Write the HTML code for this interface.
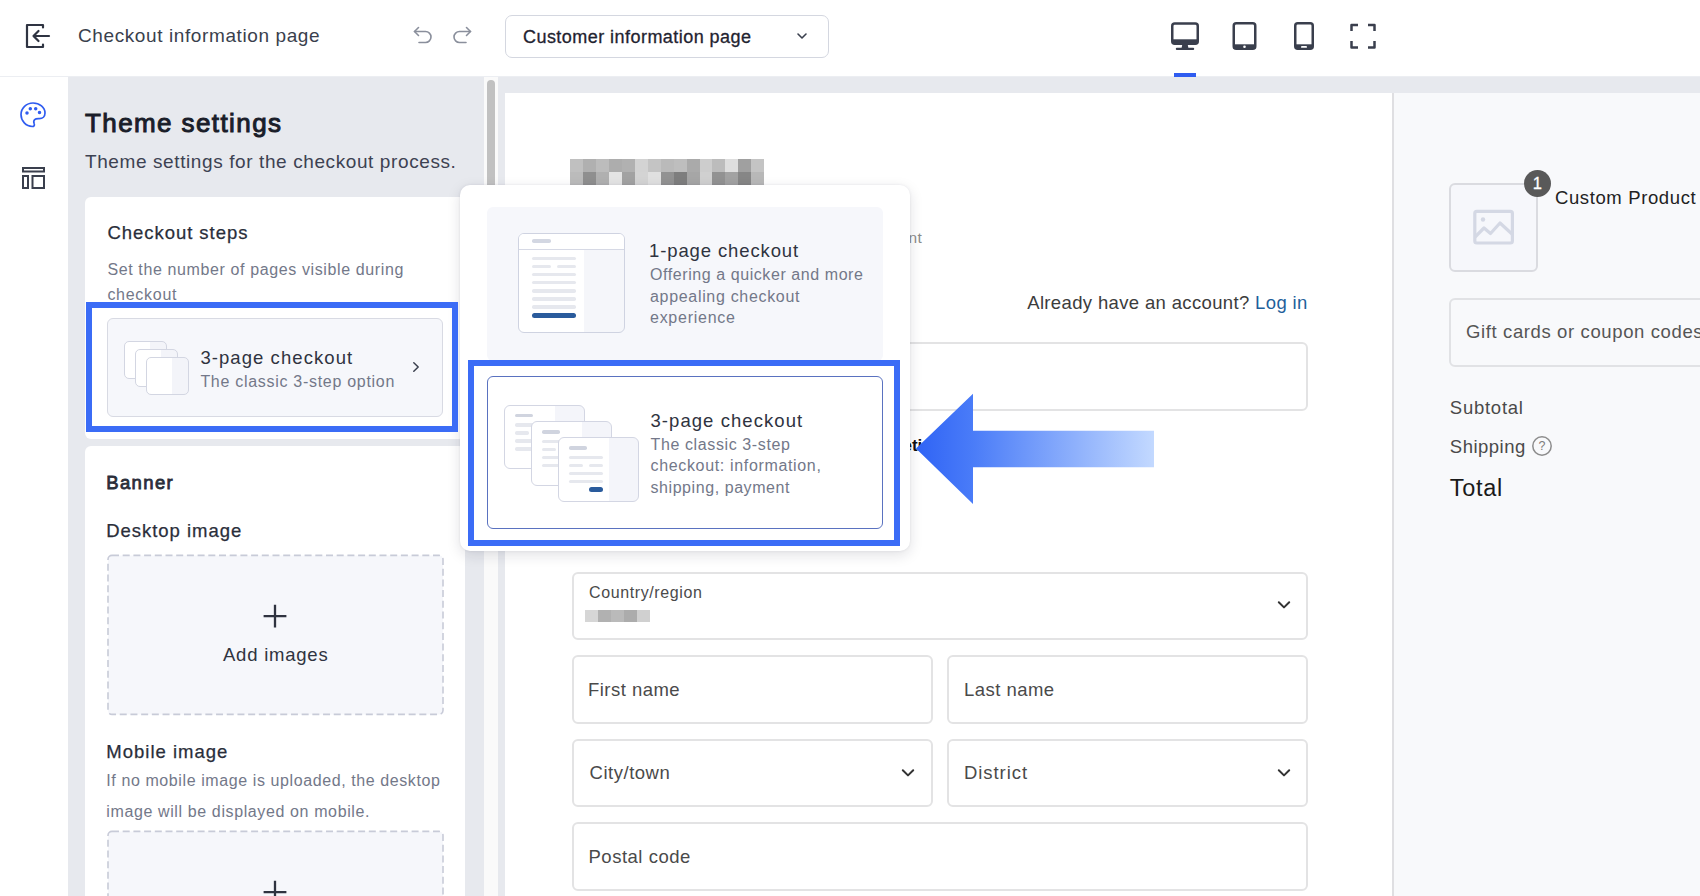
<!DOCTYPE html>
<html lang="en">
<head>
<meta charset="utf-8">
<title>Checkout information page</title>
<style>
*{box-sizing:border-box;margin:0;padding:0}
html,body{width:1700px;height:896px;overflow:hidden;background:#e7e9ee}
body{font-family:"Liberation Sans",Arial,sans-serif;color:#2b2f3a;position:relative}
.abs{position:absolute}
.t{position:absolute;white-space:nowrap;line-height:1}
/* top bar */
#top{left:0;top:0;width:1700px;height:77px;background:#fff;border-bottom:1px solid #eceef2}
#rail{left:0;top:77px;width:68px;height:819px;background:#fff}
#panel{left:68px;top:77px;width:415px;height:819px;background:#e7e9ee}
#track{left:483.500px;top:77px;width:14.500px;height:819px;background:#fafafa}
#thumb{left:487px;top:80px;width:8px;height:420px;background:#c1c1c1;border-radius:4px}
#page{left:505px;top:93px;width:888px;height:803px;background:#fff}
#side{left:1392px;top:93px;width:308px;height:803px;background:#f8f9fb;border-left:2px solid #dfdfe2}
.card{position:absolute;background:#fff;border-radius:6px}
.field{position:absolute;border:2px solid #e3e3e4;border-radius:6px;background:#fff}
.pg{width:43px;height:38px;border:1px solid #d3d6e2;border-radius:5px;background:linear-gradient(90deg,#fff 0,#fff 62%,#f3f4f9 62%,#f3f4f9 100%)}
.hl{position:absolute;border:6px solid #3b6cf6}
</style>
</head>
<body>
<!-- TOP BAR -->
<div id="top" class="abs"></div>
<div id="rail" class="abs"></div>
<div id="panel" class="abs"></div>
<div id="track" class="abs"></div>
<div id="thumb" class="abs"></div>
<div id="page" class="abs"></div>
<div id="side" class="abs"></div>

<!-- topbar content -->
<div id="topc">
<svg class="abs" style="left:24px;top:21px" width="28" height="28" viewBox="0 0 28 28" fill="none" stroke="#2f3442" stroke-width="2.200" stroke-linecap="round" stroke-linejoin="round"><path d="M19 6.5V4H3v22h16v-2.500"/><path d="M25 15H9.500M14.500 10l-5 5 5 5"/></svg>
<div class="t" id="t1" style="left:78.00px;top:26.00px;letter-spacing:0.604px;font-size:19px;color:#3a3f4d">Checkout information page</div>
<svg class="abs" style="left:411px;top:24px" width="24" height="24" viewBox="0 0 24 24" fill="none" stroke="#8a8f9c" stroke-width="1.600" stroke-linecap="round" stroke-linejoin="round"><path d="M7.500 3.500L3.500 7.500l4 4"/><path d="M3.500 7.500h11a5.500 5.500 0 0 1 0 11H8"/></svg>
<svg class="abs" style="left:450px;top:24px" width="24" height="24" viewBox="0 0 24 24" fill="none" stroke="#8a8f9c" stroke-width="1.600" stroke-linecap="round" stroke-linejoin="round"><path d="M16.500 3.500l4 4-4 4"/><path d="M20.500 7.500h-11a5.500 5.500 0 0 0 0 11H16"/></svg>
<div class="abs" style="left:505px;top:15px;width:324px;height:43px;border:1px solid #d4d7e0;border-radius:7px;background:#fff"></div>
<div class="t" id="t2" style="left:523.00px;top:28.00px;letter-spacing:0.454px;font-size:18px;color:#1f2330;-webkit-text-stroke:0.3px #1f2330">Customer information page</div>
<svg class="abs" style="left:795px;top:30px" width="14" height="12" viewBox="0 0 14 12" fill="none" stroke="#3a3f4d" stroke-width="1.600" stroke-linecap="round" stroke-linejoin="round"><path d="M3 4l4 4 4-4"/></svg>
<!-- device icons -->
<svg class="abs" style="left:1171px;top:22px" width="28" height="28" viewBox="0 0 28 28"><rect x="1.250" y="1.450" width="25.500" height="20.300" rx="2.500" fill="none" stroke="#3a3f4d" stroke-width="2.500"/><rect x="1" y="17.300" width="26" height="4.700" fill="#3a3f4d"/><path d="M11.300 22.500h5.400l.700 3.500h-6.800z" fill="#3a3f4d"/><rect x="4.800" y="25.700" width="18.400" height="2.300" rx="1" fill="#3a3f4d"/></svg>
<svg class="abs" style="left:1232px;top:22px" width="25" height="28" viewBox="0 0 25 28"><rect x="1.750" y="1.250" width="21.500" height="25.500" rx="2.500" fill="#fff" stroke="#3a3f4d" stroke-width="2.500"/><rect x="1.500" y="22.300" width="22" height="4.500" fill="#3a3f4d"/><circle cx="12.500" cy="24.800" r="1.300" fill="#fff"/></svg>
<svg class="abs" style="left:1293px;top:22px" width="22" height="28" viewBox="0 0 22 28"><rect x="2.250" y="1.250" width="17.500" height="25.500" rx="2.500" fill="#fff" stroke="#3a3f4d" stroke-width="2.500"/><rect x="2" y="22.300" width="18" height="4.500" fill="#3a3f4d"/><rect x="8" y="24" width="6" height="1.800" rx="0.900" fill="#fff"/></svg>
<svg class="abs" style="left:1349px;top:22px" width="28" height="28" viewBox="0 0 28 28" fill="none" stroke="#3a3f4d" stroke-width="2.500" stroke-linejoin="round"><path d="M2.500 9V3h6.500M19 3h6.500v6M25.500 19v6.500H19M9 25.500H2.500V19"/></svg>
<div class="abs" style="left:1174px;top:73px;width:22px;height:4px;background:#2f5cf0"></div>
</div>
<!-- rail content -->
<div id="railc">
<svg class="abs" style="left:19px;top:101px" width="28" height="28" viewBox="0 0 28 28" fill="none" stroke="#2f5cf0" stroke-width="1.700" stroke-linecap="round" stroke-linejoin="round"><path d="M14 2C7.400 2 2 7.200 2 13.600 2 20 7 25.500 13.300 25.500c1.700 0 2.500-1.300 1.900-2.700-.6-1.500-.7-3.100 .5-4.200 1.200-1.100 2.800-.9 4.600-.9 3.300 0 5.700-2.300 5.700-5.700C26 6.400 20.600 2 14 2z"/><circle cx="8" cy="12" r="0.900" fill="#2f5cf0"/><circle cx="11.300" cy="7.700" r="0.900" fill="#2f5cf0"/><circle cx="16.700" cy="7.700" r="0.900" fill="#2f5cf0"/><circle cx="20.500" cy="11.500" r="0.900" fill="#2f5cf0"/></svg>
<svg class="abs" style="left:21px;top:166px" width="26" height="24" viewBox="0 0 26 24" fill="none" stroke="#3a3f4d" stroke-width="2"><rect x="2" y="2" width="21" height="3.500"/><rect x="2" y="10" width="5" height="12"/><rect x="11.500" y="10" width="11.500" height="12"/></svg>
</div>
<!-- panel content -->
<div id="panelc">
<div class="t" id="t3" style="left:85.00px;top:110.00px;letter-spacing:1.404px;font-size:26px;color:#1a1d29;-webkit-text-stroke:1px #1a1d29">Theme settings</div>
<div class="t" id="t4" style="left:85.00px;top:152.00px;letter-spacing:0.601px;font-size:19px;color:#3d4252">Theme settings for the checkout process.</div>
<!-- card 1 -->
<div class="card" style="left:85px;top:197px;width:380px;height:242px"></div>
<div class="t" id="t5" style="left:107.40px;top:224.00px;letter-spacing:0.964px;font-size:18.500px;color:#2a2e3a;-webkit-text-stroke:0.250px #2a2e3a">Checkout steps</div>
<div class="t" id="t6" style="left:107.40px;top:262.00px;letter-spacing:0.620px;font-size:16px;color:#737889">Set the number of pages visible during</div>
<div class="t" id="t7" style="left:107.40px;top:287.00px;letter-spacing:0.715px;font-size:16px;color:#737889">checkout</div>
<div class="abs" style="left:107px;top:318px;width:336px;height:99px;border:1px solid #d8dae3;border-radius:6px;background:#f6f7fb"></div>
<div class="abs pg" style="left:124px;top:341px"></div>
<div class="abs pg" style="left:135px;top:349px"></div>
<div class="abs pg" style="left:146px;top:357px"></div>
<div class="t" id="t8" style="left:200.40px;top:349.00px;letter-spacing:1.068px;font-size:18.500px;color:#2f3340">3-page checkout</div>
<div class="t" id="t9" style="left:200.40px;top:374.00px;letter-spacing:0.705px;font-size:16px;color:#737889">The classic 3-step option</div>
<svg class="abs" style="left:409px;top:359px" width="14" height="16" viewBox="0 0 14 16" fill="none" stroke="#3a3f4d" stroke-width="1.500" stroke-linecap="round" stroke-linejoin="round"><path d="M4.800 3.800L9.200 8l-4.400 4.200"/></svg>
<!-- card 2 -->
<div class="card" style="left:85px;top:446px;width:380px;height:470px"></div>
<div class="t" id="t10" style="left:106.20px;top:474.00px;letter-spacing:1.381px;font-size:18.500px;color:#2a2e3a;-webkit-text-stroke:0.800px #2a2e3a">Banner</div>
<div class="t" id="t11" style="left:106.20px;top:522.00px;letter-spacing:0.975px;font-size:18.500px;color:#2a2e3a;-webkit-text-stroke:0.250px #2a2e3a">Desktop image</div>
<svg class="abs" style="left:106px;top:553.0px" width="340" height="164" viewBox="0 0 340 164"><rect x="2" y="2.400" width="335" height="159" rx="4" fill="#f6f7fb" stroke="#c8cbd8" stroke-width="1.600" stroke-dasharray="7 3.700"/></svg>
<svg class="abs" style="left:262px;top:603px" width="26" height="26" viewBox="0 0 26 26" fill="none" stroke="#2f3340" stroke-width="2.300"><path d="M1.600 13.100h22.800M13 1.700v22.800"/></svg>
<div class="t" id="t12" style="left:223.00px;top:646.00px;letter-spacing:0.773px;font-size:18.500px;color:#2f3340">Add images</div>
<div class="t" id="t13" style="left:106.30px;top:743.00px;letter-spacing:0.997px;font-size:18.500px;color:#2a2e3a;-webkit-text-stroke:0.250px #2a2e3a">Mobile image</div>
<div class="t" id="t14" style="left:106.30px;top:773.00px;letter-spacing:0.594px;font-size:16px;color:#737889">If no mobile image is uploaded, the desktop</div>
<div class="t" id="t15" style="left:106.30px;top:804.00px;letter-spacing:0.617px;font-size:16px;color:#737889">image will be displayed on mobile.</div>
<svg class="abs" style="left:106px;top:828.5px" width="340" height="164" viewBox="0 0 340 164"><rect x="2" y="2.400" width="335" height="159" rx="4" fill="#f6f7fb" stroke="#c8cbd8" stroke-width="1.600" stroke-dasharray="7 3.700"/></svg>
<svg class="abs" style="left:262px;top:878.500px" width="26" height="26" viewBox="0 0 26 26" fill="none" stroke="#2f3340" stroke-width="2.300"><path d="M1.600 13.100h22.800M13 1.700v22.800"/></svg>
</div>
<!-- page content -->
<div id="pagec">
<div class="abs" style="left:570.0px;top:159.0px;width:13.2px;height:13.3px;background:#c0c0c0"></div>
<div class="abs" style="left:582.9px;top:159.0px;width:13.2px;height:13.3px;background:#b0b0b0"></div>
<div class="abs" style="left:595.9px;top:159.0px;width:13.2px;height:13.3px;background:#bcbcbc"></div>
<div class="abs" style="left:608.8px;top:159.0px;width:13.2px;height:13.3px;background:#adadad"></div>
<div class="abs" style="left:621.8px;top:159.0px;width:13.2px;height:13.3px;background:#b1b1b1"></div>
<div class="abs" style="left:634.7px;top:159.0px;width:13.2px;height:13.3px;background:#d3d3d3"></div>
<div class="abs" style="left:647.7px;top:159.0px;width:13.2px;height:13.3px;background:#c4c4c4"></div>
<div class="abs" style="left:660.6px;top:159.0px;width:13.2px;height:13.3px;background:#bababa"></div>
<div class="abs" style="left:673.6px;top:159.0px;width:13.2px;height:13.3px;background:#bebebe"></div>
<div class="abs" style="left:686.5px;top:159.0px;width:13.2px;height:13.3px;background:#aaaaaa"></div>
<div class="abs" style="left:699.5px;top:159.0px;width:13.2px;height:13.3px;background:#cdcdcd"></div>
<div class="abs" style="left:712.4px;top:159.0px;width:13.2px;height:13.3px;background:#bcbcbc"></div>
<div class="abs" style="left:725.4px;top:159.0px;width:13.2px;height:13.3px;background:#dedede"></div>
<div class="abs" style="left:738.3px;top:159.0px;width:13.2px;height:13.3px;background:#a0a0a0"></div>
<div class="abs" style="left:751.3px;top:159.0px;width:13.2px;height:13.3px;background:#c4c4c4"></div>
<div class="abs" style="left:570.0px;top:172.0px;width:13.2px;height:13.3px;background:#bbbbbb"></div>
<div class="abs" style="left:582.9px;top:172.0px;width:13.2px;height:13.3px;background:#8f8f8f"></div>
<div class="abs" style="left:595.9px;top:172.0px;width:13.2px;height:13.3px;background:#b0b0b0"></div>
<div class="abs" style="left:608.8px;top:172.0px;width:13.2px;height:13.3px;background:#e4e4e4"></div>
<div class="abs" style="left:621.8px;top:172.0px;width:13.2px;height:13.3px;background:#a2a2a2"></div>
<div class="abs" style="left:634.7px;top:172.0px;width:13.2px;height:13.3px;background:#d4d4d4"></div>
<div class="abs" style="left:647.7px;top:172.0px;width:13.2px;height:13.3px;background:#e0e0e0"></div>
<div class="abs" style="left:660.6px;top:172.0px;width:13.2px;height:13.3px;background:#929292"></div>
<div class="abs" style="left:673.6px;top:172.0px;width:13.2px;height:13.3px;background:#7e7e7e"></div>
<div class="abs" style="left:686.5px;top:172.0px;width:13.2px;height:13.3px;background:#a6a6a6"></div>
<div class="abs" style="left:699.5px;top:172.0px;width:13.2px;height:13.3px;background:#d0d0d0"></div>
<div class="abs" style="left:712.4px;top:172.0px;width:13.2px;height:13.3px;background:#929292"></div>
<div class="abs" style="left:725.4px;top:172.0px;width:13.2px;height:13.3px;background:#a2a2a2"></div>
<div class="abs" style="left:738.3px;top:172.0px;width:13.2px;height:13.3px;background:#868686"></div>
<div class="abs" style="left:751.3px;top:172.0px;width:13.2px;height:13.3px;background:#b8b8b8"></div>
<div class="t" id="p1" style="right:778px;top:229.900px;font-size:15.500px;letter-spacing:0.300px;color:#8c8c8c">Payment</div>
<div class="t" id="p2" style="left:1027.20px;top:294.00px;letter-spacing:0.354px;font-size:18.500px;color:#3c3c3c">Already have an account? <span style="color:#1f5f9b">Log in</span></div>
<div class="field" style="left:572px;top:342px;width:736px;height:69px"></div>
<div class="t" id="p3" style="left:862.800px;top:436.900px;font-size:17px;font-weight:bold;color:#111">Marketing</div>
<div class="field" style="left:572px;top:572px;width:736px;height:68px"></div>
<div class="t" id="p4" style="left:589.00px;top:585.00px;letter-spacing:0.612px;font-size:16px;color:#4a4a4a">Country/region</div>
<div class="abs" style="left:585.0px;top:609.5px;width:13.2px;height:12.8px;background:#d6d6d6"></div>
<div class="abs" style="left:597.9px;top:609.5px;width:13.2px;height:12.8px;background:#b1b1b1"></div>
<div class="abs" style="left:610.8px;top:609.5px;width:13.2px;height:12.8px;background:#bababa"></div>
<div class="abs" style="left:623.7px;top:609.5px;width:13.2px;height:12.8px;background:#acacac"></div>
<div class="abs" style="left:636.6px;top:609.5px;width:13.2px;height:12.8px;background:#d0d0d0"></div>
<div class="field" style="left:572px;top:655px;width:361px;height:69px"></div>
<div class="field" style="left:947px;top:655px;width:361px;height:69px"></div>
<div class="t" id="p5" style="left:588.00px;top:681.00px;letter-spacing:0.468px;font-size:18.500px;color:#4a4a4a">First name</div>
<div class="t" id="p6" style="left:963.90px;top:681.00px;letter-spacing:0.476px;font-size:18.500px;color:#4a4a4a">Last name</div>
<div class="field" style="left:572px;top:739px;width:361px;height:68px"></div>
<div class="field" style="left:947px;top:739px;width:361px;height:68px"></div>
<div class="t" id="p7" style="left:589.50px;top:764.00px;letter-spacing:0.526px;font-size:18.500px;color:#4a4a4a">City/town</div>
<div class="t" id="p8" style="left:963.90px;top:764.00px;letter-spacing:0.960px;font-size:18.500px;color:#4a4a4a">District</div>
<div class="field" style="left:572px;top:822px;width:736px;height:69px"></div>
<div class="t" id="p9" style="left:588.50px;top:848.00px;letter-spacing:0.512px;font-size:18.500px;color:#4a4a4a">Postal code</div>
<svg class="abs chev" style="left:1277px;top:599px" width="14" height="12" viewBox="0 0 14 12" fill="none" stroke="#333" stroke-width="2" stroke-linecap="round" stroke-linejoin="round"><path d="M1.800 3.200l5.200 5.200 5.200-5.200"/></svg>
<svg class="abs chev" style="left:901px;top:767px" width="14" height="12" viewBox="0 0 14 12" fill="none" stroke="#333" stroke-width="2" stroke-linecap="round" stroke-linejoin="round"><path d="M1.800 3.200l5.200 5.200 5.200-5.200"/></svg>
<svg class="abs chev" style="left:1277px;top:767px" width="14" height="12" viewBox="0 0 14 12" fill="none" stroke="#333" stroke-width="2" stroke-linecap="round" stroke-linejoin="round"><path d="M1.800 3.200l5.200 5.200 5.200-5.200"/></svg>
</div>
<!-- side content -->
<div id="sidec">
<div class="abs" style="left:1449px;top:183px;width:89px;height:89px;border:2px solid #dadbe0;border-radius:6px;background:#f6f7fb"></div>
<svg class="abs" style="left:1471px;top:207px" width="46" height="40" viewBox="0 0 46 40" fill="none" stroke="#d4d8e4" stroke-width="3.200" stroke-linejoin="round"><rect x="3.800" y="4.400" width="37.600" height="31.600" rx="2"/><path d="M4 30l9-9 6.500 5.500 9.500-10.500 12 11"/><circle cx="12" cy="12.500" r="2.200" fill="#d4d8e4" stroke="none"/></svg>
<div class="abs" style="left:1524px;top:170.300px;width:26.800px;height:26.800px;border-radius:50%;background:#595959"></div>
<div class="t" id="s0" style="left:1532.700px;top:175px;font-size:16.500px;color:#fff;-webkit-text-stroke:0.300px #fff">1</div>
<div class="t" id="s1" style="left:1554.90px;top:189.00px;letter-spacing:0.631px;font-size:18.500px;color:#222">Custom Product</div>
<div class="abs" style="left:1449px;top:298px;width:300px;height:69px;border:2px solid #e1e2e5;border-radius:6px;background:#f8f9fb"></div>
<div class="t" id="s2" style="left:1466.00px;top:323.00px;letter-spacing:0.619px;font-size:18.500px;color:#555">Gift cards or coupon codes</div>
<div class="t" id="s3" style="left:1449.80px;top:399.00px;letter-spacing:0.747px;font-size:18.500px;color:#4a4a4a">Subtotal</div>
<div class="t" id="s4" style="left:1449.80px;top:438.00px;letter-spacing:0.498px;font-size:18.500px;color:#4a4a4a">Shipping</div>
<svg class="abs" style="left:1531px;top:435px" width="22" height="22" viewBox="0 0 22 22"><circle cx="11" cy="11" r="9.200" fill="none" stroke="#8c8c8c" stroke-width="1.500"/><text x="11" y="15.200" font-size="12.500" font-family="Liberation Sans, sans-serif" fill="#7c7c7c" text-anchor="middle">?</text></svg>
<div class="t" id="s5" style="left:1449.80px;top:477.00px;letter-spacing:0.695px;font-size:23.500px;color:#1a1a1a">Total</div>
</div>
<!-- popup -->
<div id="popup">
<div class="abs" style="left:460px;top:185px;width:450px;height:366px;background:#fff;border-radius:10px;box-shadow:0 4px 14px rgba(20,25,45,.130),0 0 3px rgba(20,25,45,.080)"></div>
<div class="abs" style="left:487px;top:207px;width:396px;height:154px;background:#f6f7fb;border-radius:6px"></div>
<div class="abs" style="left:517.500px;top:233px;width:107px;height:100px;border:1px solid #cfd3e1;border-radius:6px;background:linear-gradient(90deg,#fff 0,#fff 62%,#f5f6fa 62%,#f5f6fa 100%);overflow:hidden"><div class="abs" style="left:0;top:0;width:108px;height:16px;background:#fff;border-bottom:1px solid #d6d9e5"></div></div>
<div class="abs" style="left:532.4px;top:239.0px;width:18.6px;height:3.6px;border-radius:1.8px;background:#d3d7e2"></div>
<div class="abs" style="left:532.4px;top:256.5px;width:43.2px;height:3.6px;border-radius:1.8px;background:#e6e8ee"></div>
<div class="abs" style="left:532.4px;top:264.6px;width:18.6px;height:3.6px;border-radius:1.8px;background:#e6e8ee"></div>
<div class="abs" style="left:556.6px;top:264.6px;width:19.0px;height:3.6px;border-radius:1.8px;background:#e6e8ee"></div>
<div class="abs" style="left:532.4px;top:272.7px;width:43.2px;height:3.6px;border-radius:1.8px;background:#e6e8ee"></div>
<div class="abs" style="left:532.4px;top:280.8px;width:43.2px;height:3.6px;border-radius:1.8px;background:#e6e8ee"></div>
<div class="abs" style="left:532.4px;top:289.0px;width:43.2px;height:3.6px;border-radius:1.8px;background:#e6e8ee"></div>
<div class="abs" style="left:532.4px;top:297.1px;width:43.2px;height:3.6px;border-radius:1.8px;background:#e6e8ee"></div>
<div class="abs" style="left:532.4px;top:305.2px;width:43.2px;height:3.6px;border-radius:1.8px;background:#e6e8ee"></div>
<div class="abs" style="left:532.4px;top:313.0px;width:43.2px;height:5.4px;border-radius:2.7px;background:#2a5b9c"></div>
<div class="t" id="u1" style="left:649.00px;top:242.00px;letter-spacing:0.882px;font-size:18.500px;color:#2f3340">1-page checkout</div>
<div class="t" id="u2" style="left:650.00px;top:267.00px;letter-spacing:0.572px;font-size:16px;color:#737889">Offering a quicker and more</div>
<div class="t" id="u3" style="left:650.00px;top:289.00px;letter-spacing:0.680px;font-size:16px;color:#737889">appealing checkout</div>
<div class="t" id="u4" style="left:650.00px;top:310.00px;letter-spacing:0.736px;font-size:16px;color:#737889">experience</div>
<div class="abs" style="left:487px;top:376px;width:396px;height:153px;background:#fff;border:1px solid #5a72c0;border-radius:6px"></div>
<div class="abs" style="left:504.2px;top:404.5px;width:80.500px;height:64.500px;border:1px solid #d3d6e3;border-radius:6px;background:linear-gradient(90deg,#fff 0,#fff 63.500%,#f4f5fa 63.500%,#f4f5fa 100%)"></div>
<div class="abs" style="left:514.8px;top:413.8px;width:18.5px;height:3.5px;border-radius:1.8px;background:#d0d4df"></div>
<div class="abs" style="left:514.8px;top:423.3px;width:34.6px;height:3.5px;border-radius:1.8px;background:#e6e8ee"></div>
<div class="abs" style="left:514.8px;top:431.2px;width:14.0px;height:3.5px;border-radius:1.8px;background:#e6e8ee"></div>
<div class="abs" style="left:535.2px;top:431.2px;width:14.2px;height:3.5px;border-radius:1.8px;background:#e6e8ee"></div>
<div class="abs" style="left:514.8px;top:439.3px;width:34.6px;height:3.5px;border-radius:1.8px;background:#e6e8ee"></div>
<div class="abs" style="left:514.8px;top:447.3px;width:34.6px;height:3.5px;border-radius:1.8px;background:#e6e8ee"></div><div class="abs" style="left:531.0px;top:421.0px;width:80.500px;height:64.500px;border:1px solid #d3d6e3;border-radius:6px;background:linear-gradient(90deg,#fff 0,#fff 63.500%,#f4f5fa 63.500%,#f4f5fa 100%)"></div>
<div class="abs" style="left:541.6px;top:430.3px;width:18.5px;height:3.5px;border-radius:1.8px;background:#d0d4df"></div>
<div class="abs" style="left:541.6px;top:439.8px;width:34.6px;height:3.5px;border-radius:1.8px;background:#e6e8ee"></div>
<div class="abs" style="left:541.6px;top:447.7px;width:14.0px;height:3.5px;border-radius:1.8px;background:#e6e8ee"></div>
<div class="abs" style="left:562.0px;top:447.7px;width:14.2px;height:3.5px;border-radius:1.8px;background:#e6e8ee"></div>
<div class="abs" style="left:541.6px;top:455.8px;width:34.6px;height:3.5px;border-radius:1.8px;background:#e6e8ee"></div>
<div class="abs" style="left:541.6px;top:463.8px;width:34.6px;height:3.5px;border-radius:1.8px;background:#e6e8ee"></div><div class="abs" style="left:558.3px;top:437.0px;width:80.500px;height:64.500px;border:1px solid #d3d6e3;border-radius:6px;background:linear-gradient(90deg,#fff 0,#fff 63.500%,#f4f5fa 63.500%,#f4f5fa 100%)"></div>
<div class="abs" style="left:568.9px;top:446.3px;width:18.5px;height:3.5px;border-radius:1.8px;background:#d0d4df"></div>
<div class="abs" style="left:568.9px;top:455.8px;width:34.6px;height:3.5px;border-radius:1.8px;background:#e6e8ee"></div>
<div class="abs" style="left:568.9px;top:463.7px;width:14.0px;height:3.5px;border-radius:1.8px;background:#e6e8ee"></div>
<div class="abs" style="left:589.3px;top:463.7px;width:14.2px;height:3.5px;border-radius:1.8px;background:#e6e8ee"></div>
<div class="abs" style="left:568.9px;top:471.8px;width:34.6px;height:3.5px;border-radius:1.8px;background:#e6e8ee"></div>
<div class="abs" style="left:568.9px;top:479.8px;width:34.6px;height:3.5px;border-radius:1.8px;background:#e6e8ee"></div><div class="abs" style="left:589.3px;top:486.5px;width:14.2px;height:5.0px;border-radius:2.5px;background:#2a5b9c"></div>
<div class="t" id="u5" style="left:650.50px;top:412.00px;letter-spacing:1.061px;font-size:18.500px;color:#2f3340">3-page checkout</div>
<div class="t" id="u6" style="left:650.50px;top:437.00px;letter-spacing:0.615px;font-size:16px;color:#737889">The classic 3-step</div>
<div class="t" id="u7" style="left:650.50px;top:458.00px;letter-spacing:0.658px;font-size:16px;color:#737889">checkout: information,</div>
<div class="t" id="u8" style="left:650.50px;top:480.00px;letter-spacing:0.568px;font-size:16px;color:#737889">shipping, payment</div>
</div>
<!-- annotations -->
<div id="annot">
<div class="hl" style="left:86px;top:302px;width:372px;height:130px"></div>
<div class="hl" style="left:468px;top:360px;width:432px;height:186px"></div>
<svg class="abs" style="left:910px;top:388px" width="250" height="122" viewBox="0 0 250 122"><defs><linearGradient id="ag" x1="0" y1="0" x2="1" y2="0"><stop offset="0" stop-color="#2f63f5"/><stop offset="0.240" stop-color="#4a7cf8"/><stop offset="1" stop-color="#c3d9ff"/></linearGradient></defs><path d="M6 60.600L63 5.700V42.700H244V79.300H63V116Z" fill="url(#ag)"/></svg>
</div>
</body>
</html>
